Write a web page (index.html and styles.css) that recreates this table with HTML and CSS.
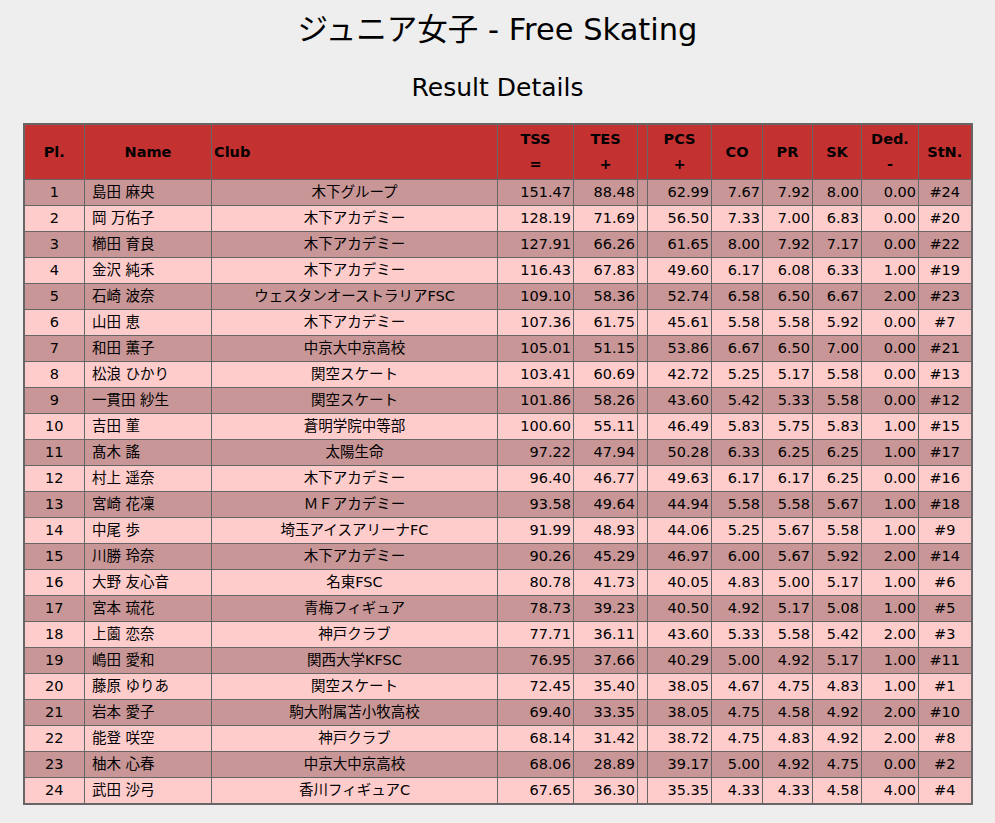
FILE: index.html
```html
<!DOCTYPE html>
<html lang="ja">
<head>
<meta charset="utf-8">
<title>ジュニア女子 - Free Skating</title>
<link rel="stylesheet" href="styles.css">
</head>
<body>
<h1 class="title">ジュニア女子 - Free Skating</h1>
<h2 class="subtitle">Result Details</h2>
<table class="results">
<colgroup>
<col class="c-pl"><col class="c-name"><col class="c-club"><col class="c-tss"><col class="c-tes"><col class="c-gap"><col class="c-pcs"><col class="c-co"><col class="c-pr"><col class="c-sk"><col class="c-ded"><col class="c-stn">
</colgroup>
<thead>
<tr>
<th>Pl.</th><th>Name</th><th class="left">Club</th><th>TSS<br>=</th><th>TES<br>+</th><th></th><th>PCS<br>+</th><th>CO</th><th>PR</th><th>SK</th><th>Ded.<br>-</th><th>StN.</th>
</tr>
</thead>
<tbody>
<tr class="odd"><td class="center">1</td><td class="name">島田 麻央</td><td class="center">木下グループ</td><td>151.47</td><td>88.48</td><td></td><td>62.99</td><td>7.67</td><td>7.92</td><td>8.00</td><td>0.00</td><td class="center">#24</td></tr>
<tr class="even"><td class="center">2</td><td class="name">岡 万佑子</td><td class="center">木下アカデミー</td><td>128.19</td><td>71.69</td><td></td><td>56.50</td><td>7.33</td><td>7.00</td><td>6.83</td><td>0.00</td><td class="center">#20</td></tr>
<tr class="odd"><td class="center">3</td><td class="name">櫛田 育良</td><td class="center">木下アカデミー</td><td>127.91</td><td>66.26</td><td></td><td>61.65</td><td>8.00</td><td>7.92</td><td>7.17</td><td>0.00</td><td class="center">#22</td></tr>
<tr class="even"><td class="center">4</td><td class="name">金沢 純禾</td><td class="center">木下アカデミー</td><td>116.43</td><td>67.83</td><td></td><td>49.60</td><td>6.17</td><td>6.08</td><td>6.33</td><td>1.00</td><td class="center">#19</td></tr>
<tr class="odd"><td class="center">5</td><td class="name">石崎 波奈</td><td class="center">ウェスタンオーストラリアFSC</td><td>109.10</td><td>58.36</td><td></td><td>52.74</td><td>6.58</td><td>6.50</td><td>6.67</td><td>2.00</td><td class="center">#23</td></tr>
<tr class="even"><td class="center">6</td><td class="name">山田 恵</td><td class="center">木下アカデミー</td><td>107.36</td><td>61.75</td><td></td><td>45.61</td><td>5.58</td><td>5.58</td><td>5.92</td><td>0.00</td><td class="center">#7</td></tr>
<tr class="odd"><td class="center">7</td><td class="name">和田 薫子</td><td class="center">中京大中京高校</td><td>105.01</td><td>51.15</td><td></td><td>53.86</td><td>6.67</td><td>6.50</td><td>7.00</td><td>0.00</td><td class="center">#21</td></tr>
<tr class="even"><td class="center">8</td><td class="name">松浪 ひかり</td><td class="center">関空スケート</td><td>103.41</td><td>60.69</td><td></td><td>42.72</td><td>5.25</td><td>5.17</td><td>5.58</td><td>0.00</td><td class="center">#13</td></tr>
<tr class="odd"><td class="center">9</td><td class="name">一貫田 紗生</td><td class="center">関空スケート</td><td>101.86</td><td>58.26</td><td></td><td>43.60</td><td>5.42</td><td>5.33</td><td>5.58</td><td>0.00</td><td class="center">#12</td></tr>
<tr class="even"><td class="center">10</td><td class="name">吉田 菫</td><td class="center">蒼明学院中等部</td><td>100.60</td><td>55.11</td><td></td><td>46.49</td><td>5.83</td><td>5.75</td><td>5.83</td><td>1.00</td><td class="center">#15</td></tr>
<tr class="odd"><td class="center">11</td><td class="name">髙木 謠</td><td class="center">太陽生命</td><td>97.22</td><td>47.94</td><td></td><td>50.28</td><td>6.33</td><td>6.25</td><td>6.25</td><td>1.00</td><td class="center">#17</td></tr>
<tr class="even"><td class="center">12</td><td class="name">村上 遥奈</td><td class="center">木下アカデミー</td><td>96.40</td><td>46.77</td><td></td><td>49.63</td><td>6.17</td><td>6.17</td><td>6.25</td><td>0.00</td><td class="center">#16</td></tr>
<tr class="odd"><td class="center">13</td><td class="name">宮崎 花凜</td><td class="center">ＭＦアカデミー</td><td>93.58</td><td>49.64</td><td></td><td>44.94</td><td>5.58</td><td>5.58</td><td>5.67</td><td>1.00</td><td class="center">#18</td></tr>
<tr class="even"><td class="center">14</td><td class="name">中尾 歩</td><td class="center">埼玉アイスアリーナFC</td><td>91.99</td><td>48.93</td><td></td><td>44.06</td><td>5.25</td><td>5.67</td><td>5.58</td><td>1.00</td><td class="center">#9</td></tr>
<tr class="odd"><td class="center">15</td><td class="name">川勝 玲奈</td><td class="center">木下アカデミー</td><td>90.26</td><td>45.29</td><td></td><td>46.97</td><td>6.00</td><td>5.67</td><td>5.92</td><td>2.00</td><td class="center">#14</td></tr>
<tr class="even"><td class="center">16</td><td class="name">大野 友心音</td><td class="center">名東FSC</td><td>80.78</td><td>41.73</td><td></td><td>40.05</td><td>4.83</td><td>5.00</td><td>5.17</td><td>1.00</td><td class="center">#6</td></tr>
<tr class="odd"><td class="center">17</td><td class="name">宮本 琉花</td><td class="center">青梅フィギュア</td><td>78.73</td><td>39.23</td><td></td><td>40.50</td><td>4.92</td><td>5.17</td><td>5.08</td><td>1.00</td><td class="center">#5</td></tr>
<tr class="even"><td class="center">18</td><td class="name">上薗 恋奈</td><td class="center">神戸クラブ</td><td>77.71</td><td>36.11</td><td></td><td>43.60</td><td>5.33</td><td>5.58</td><td>5.42</td><td>2.00</td><td class="center">#3</td></tr>
<tr class="odd"><td class="center">19</td><td class="name">嶋田 愛和</td><td class="center">関西大学KFSC</td><td>76.95</td><td>37.66</td><td></td><td>40.29</td><td>5.00</td><td>4.92</td><td>5.17</td><td>1.00</td><td class="center">#11</td></tr>
<tr class="even"><td class="center">20</td><td class="name">藤原 ゆりあ</td><td class="center">関空スケート</td><td>72.45</td><td>35.40</td><td></td><td>38.05</td><td>4.67</td><td>4.75</td><td>4.83</td><td>1.00</td><td class="center">#1</td></tr>
<tr class="odd"><td class="center">21</td><td class="name">岩本 愛子</td><td class="center">駒大附属苫小牧高校</td><td>69.40</td><td>33.35</td><td></td><td>38.05</td><td>4.75</td><td>4.58</td><td>4.92</td><td>2.00</td><td class="center">#10</td></tr>
<tr class="even"><td class="center">22</td><td class="name">能登 咲空</td><td class="center">神戸クラブ</td><td>68.14</td><td>31.42</td><td></td><td>38.72</td><td>4.75</td><td>4.83</td><td>4.92</td><td>2.00</td><td class="center">#8</td></tr>
<tr class="odd"><td class="center">23</td><td class="name">柚木 心春</td><td class="center">中京大中京高校</td><td>68.06</td><td>28.89</td><td></td><td>39.17</td><td>5.00</td><td>4.92</td><td>4.75</td><td>0.00</td><td class="center">#2</td></tr>
<tr class="even"><td class="center">24</td><td class="name">武田 沙弓</td><td class="center">香川フィギュアC</td><td>67.65</td><td>36.30</td><td></td><td>35.35</td><td>4.33</td><td>4.33</td><td>4.58</td><td>4.00</td><td class="center">#4</td></tr>
</tbody>
</table>
</body>
</html>
```
FILE: styles.css
```css
html, body {
  margin: 0;
  padding: 0;
  background: #eeeeee;
  color: #000;
  font-family: "DejaVu Sans", Verdana, "Noto Sans CJK JP", sans-serif;
}

.title {
  margin: 12px 0 0;
  font-size: 30.5px;
  line-height: 36px;
  font-weight: normal;
  text-align: center;
}

.subtitle {
  margin: 25px 0 20px;
  font-size: 25px;
  line-height: 30px;
  font-weight: normal;
  text-align: center;
}

.results {
  margin: 0 auto;
  width: 948px;
  table-layout: fixed;
  border-collapse: collapse;
  border: 2px solid #666666;
  font-size: 14.5px;
}

.c-pl { width: 61px; }
.c-name { width: 127px; }
.c-club { width: 286px; }
.c-tss { width: 76px; }
.c-tes { width: 64px; }
.c-gap { width: 10px; }
.c-pcs { width: 64px; }
.c-co { width: 51px; }
.c-pr { width: 50px; }
.c-sk { width: 49px; }
.c-ded { width: 57px; }
.c-stn { width: 53px; }

.results th,
.results td {
  border: 1px solid #666666;
  padding: 2px 2px;
  white-space: nowrap;
  overflow: hidden;
}

.results th {
  background: #c43131;
  font-weight: bold;
  text-align: center;
  line-height: 25px;
  height: 50px;
}

.results th.left {
  text-align: left;
}

.results td {
  line-height: 21px;
  height: 21px;
  text-align: right;
}

.results td.center {
  text-align: center;
}

.results td.name {
  text-align: left;
  padding-left: 7px;
}

.results tr.odd td {
  background: #c89696;
}

.results tr.even td {
  background: #ffcccc;
}
```
